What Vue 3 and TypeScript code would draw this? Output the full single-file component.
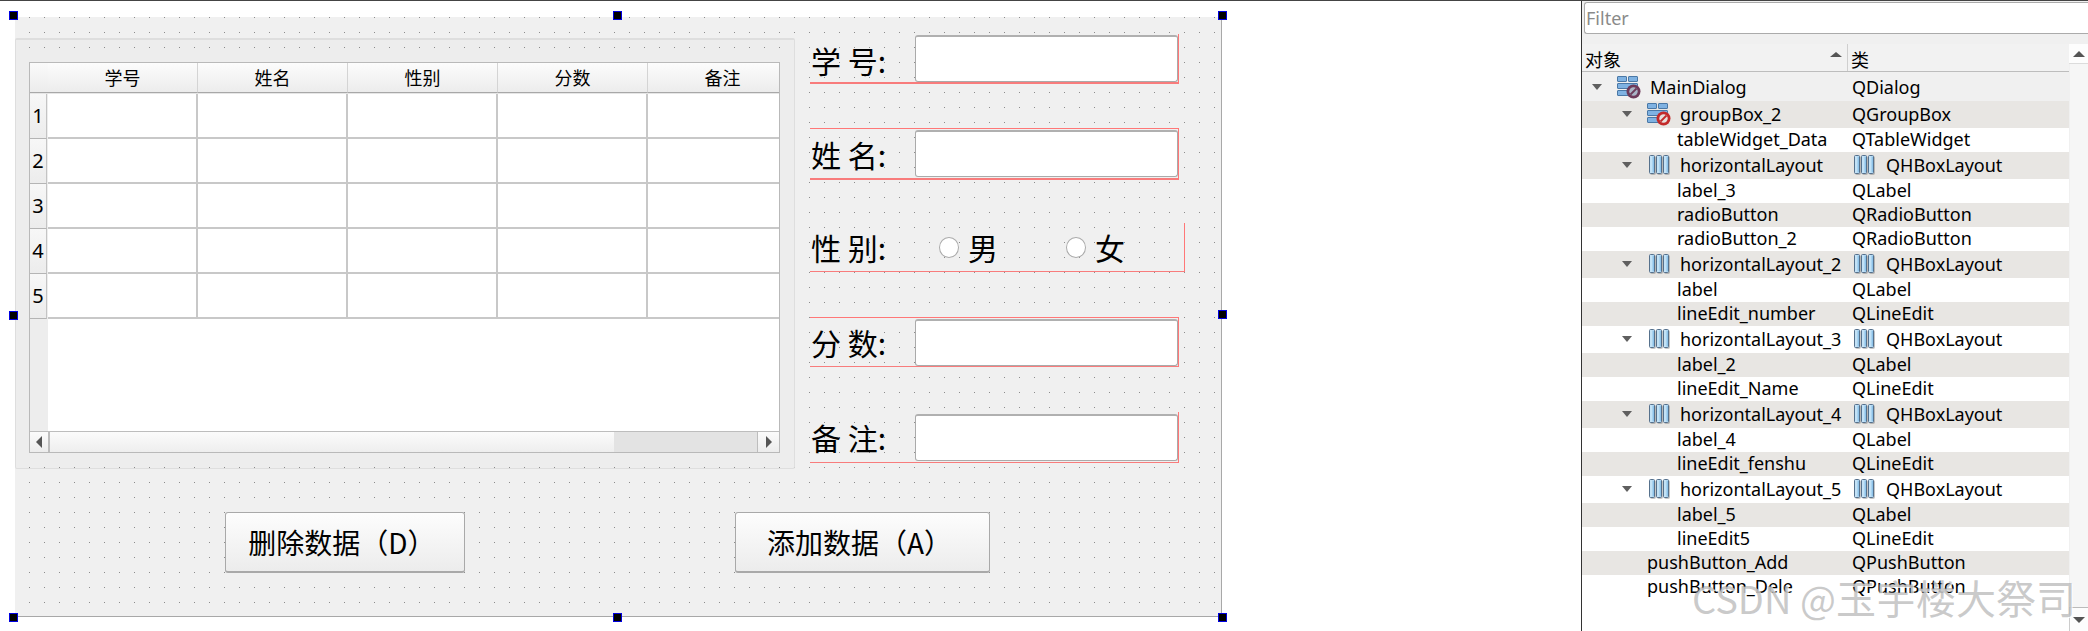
<script setup lang="ts">
type Kind = 'dialog' | 'gbox' | 'hbox' | 'leaf'
interface TreeNode { name: string; cls: string; depth: 0 | 1 | 2; kind: Kind }
const headers = ['学号', '姓名', '性别', '分数', '备注']
const rowNums = [1, 2, 3, 4, 5]
const handles = ['tl', 'tm', 'tr', 'ml', 'mr', 'bl', 'bm', 'br']
const nodes: TreeNode[] = [
  { name: 'MainDialog', cls: 'QDialog', depth: 0, kind: 'dialog' },
  { name: 'groupBox_2', cls: 'QGroupBox', depth: 1, kind: 'gbox' },
  { name: 'tableWidget_Data', cls: 'QTableWidget', depth: 2, kind: 'leaf' },
  { name: 'horizontalLayout', cls: 'QHBoxLayout', depth: 1, kind: 'hbox' },
  { name: 'label_3', cls: 'QLabel', depth: 2, kind: 'leaf' },
  { name: 'radioButton', cls: 'QRadioButton', depth: 2, kind: 'leaf' },
  { name: 'radioButton_2', cls: 'QRadioButton', depth: 2, kind: 'leaf' },
  { name: 'horizontalLayout_2', cls: 'QHBoxLayout', depth: 1, kind: 'hbox' },
  { name: 'label', cls: 'QLabel', depth: 2, kind: 'leaf' },
  { name: 'lineEdit_number', cls: 'QLineEdit', depth: 2, kind: 'leaf' },
  { name: 'horizontalLayout_3', cls: 'QHBoxLayout', depth: 1, kind: 'hbox' },
  { name: 'label_2', cls: 'QLabel', depth: 2, kind: 'leaf' },
  { name: 'lineEdit_Name', cls: 'QLineEdit', depth: 2, kind: 'leaf' },
  { name: 'horizontalLayout_4', cls: 'QHBoxLayout', depth: 1, kind: 'hbox' },
  { name: 'label_4', cls: 'QLabel', depth: 2, kind: 'leaf' },
  { name: 'lineEdit_fenshu', cls: 'QLineEdit', depth: 2, kind: 'leaf' },
  { name: 'horizontalLayout_5', cls: 'QHBoxLayout', depth: 1, kind: 'hbox' },
  { name: 'label_5', cls: 'QLabel', depth: 2, kind: 'leaf' },
  { name: 'lineEdit5', cls: 'QLineEdit', depth: 2, kind: 'leaf' },
  { name: 'pushButton_Add', cls: 'QPushButton', depth: 1, kind: 'leaf' },
  { name: 'pushButton_Dele', cls: 'QPushButton', depth: 1, kind: 'leaf' },
]
</script>

<template>
  <div class="page">
    <section class="designer">
      <div class="form">
        <span v-for="h in handles" :key="h" class="handle" :class="h"></span>
        <div class="upper">
          <div class="group">
            <div class="table">
              <div class="thead">
                <div class="corner"></div>
                <div class="hcols">
                  <div v-for="h in headers" :key="h" class="hcell">{{ h }}</div>
                </div>
              </div>
              <div v-for="n in rowNums" :key="n" class="trow">
                <div class="rhead">{{ n }}</div>
                <div class="cells">
                  <div v-for="h in headers" :key="h" class="cell"></div>
                </div>
              </div>
              <div class="filler">
                <div class="strip"></div>
                <div class="blank"></div>
              </div>
              <div class="hscroll">
                <div class="sbtn"><span class="tri-left"></span></div>
                <div class="thumb"></div>
                <div class="trough"></div>
                <div class="sbtn end"><span class="tri-right"></span></div>
              </div>
            </div>
          </div>
          <div class="fields">
            <div class="field r1">
              <span class="flabel">学 号:</span>
              <div class="input"></div>
            </div>
            <div class="field r2">
              <span class="flabel">姓 名:</span>
              <div class="input"></div>
            </div>
            <div class="field r3">
              <span class="flabel">性 别:</span>
              <label class="radio"><span class="dot"></span><span>男</span></label>
              <label class="radio"><span class="dot"></span><span>女</span></label>
            </div>
            <div class="field r4">
              <span class="flabel">分 数:</span>
              <div class="input"></div>
            </div>
            <div class="field r5">
              <span class="flabel">备 注:</span>
              <div class="input"></div>
            </div>
          </div>
        </div>
        <div class="actions">
          <button class="btn del">删除数据（D）</button>
          <button class="btn add">添加数据（A）</button>
        </div>
      </div>
    </section>

    <aside class="inspector">
      <div class="filterbar">
        <div class="filter">Filter</div>
      </div>
      <div class="treewrap">
        <div class="tree">
          <div class="treehead">
            <div class="th first"><span>对象</span><span class="sort"></span></div>
            <div class="th"><span>类</span></div>
          </div>
          <div v-for="(n, i) in nodes" :key="n.name" class="node" :class="[`d${n.depth}`, n.kind, { top: i === 0 }]">
            <div class="ncol">
              <span v-if="n.kind !== 'leaf'" class="arrow"></span>
              <span v-if="n.kind === 'dialog' || n.kind === 'gbox'" class="icon">
                <svg width="24" height="24" viewBox="0 0 24 24">
                  <g fill="#7fb2e2" stroke="#4a78a6" stroke-width="1">
                    <rect x="0.5" y="1.5" width="9" height="5" rx="0.5" />
                    <rect x="11.5" y="1.5" width="9" height="5" rx="0.5" />
                    <rect x="0.5" y="8.5" width="20" height="5" rx="0.5" />
                    <rect x="0.5" y="15.5" width="12" height="5" rx="0.5" />
                  </g>
                  <g v-if="n.kind === 'dialog'">
                    <circle cx="16.5" cy="16.5" r="7" fill="#6d3a5a" />
                    <circle cx="16.5" cy="16.5" r="4.2" fill="#a9b4c6" />
                    <path d="M13.5 19.5 19.5 13.5" stroke="#6d3a5a" stroke-width="1.8" />
                  </g>
                  <g v-else>
                    <circle cx="16.5" cy="16.5" r="7" fill="#c32a2a" />
                    <circle cx="16.5" cy="16.5" r="4.2" fill="#e6e0dc" />
                    <path d="M13.5 19.5 19.5 13.5" stroke="#c32a2a" stroke-width="1.8" />
                  </g>
                </svg>
              </span>
              <span v-if="n.kind === 'hbox'" class="icon">
                <svg class="barsvg" width="20" height="20" viewBox="0 0 20 20">
                  <g fill="#c3e2f6" stroke="#56718c" stroke-width="1">
                    <rect x="0.5" y="0.5" width="5" height="18" rx="1" />
                    <rect x="7.5" y="0.5" width="5" height="18" rx="1" />
                    <rect x="14.5" y="0.5" width="5" height="18" rx="1" />
                  </g>
                  <g fill="#8fc4ea">
                    <rect x="3.5" y="1.5" width="1.5" height="16" />
                    <rect x="10.5" y="1.5" width="1.5" height="16" />
                    <rect x="17.5" y="1.5" width="1.5" height="16" />
                  </g>
                </svg>
              </span>
              <span class="nname">{{ n.name }}</span>
            </div>
            <div class="ccol">
              <svg v-if="n.kind === 'hbox'" class="barsvg cicon" width="20" height="20" viewBox="0 0 20 20">
                <g fill="#c3e2f6" stroke="#56718c" stroke-width="1">
                  <rect x="0.5" y="0.5" width="5" height="18" rx="1" />
                  <rect x="7.5" y="0.5" width="5" height="18" rx="1" />
                  <rect x="14.5" y="0.5" width="5" height="18" rx="1" />
                </g>
                <g fill="#8fc4ea">
                  <rect x="3.5" y="1.5" width="1.5" height="16" />
                  <rect x="10.5" y="1.5" width="1.5" height="16" />
                  <rect x="17.5" y="1.5" width="1.5" height="16" />
                </g>
              </svg>
              <span>{{ n.cls }}</span>
            </div>
          </div>
        </div>
        <div class="vscroll">
          <div class="vbtn"><span class="tri-up"></span></div>
          <div class="vtrack"></div>
          <div class="vbtn low"><span class="tri-down"></span></div>
        </div>
      </div>
      <div class="watermark">CSDN @<span class="wm-cjk">玉宇楼大祭司</span></div>
    </aside>
  </div>
</template>

<style scoped>
.page {
  width: 2088px;
  height: 631px;
  box-sizing: border-box;
  border-top: 1px solid #444;
  display: flex;
  overflow: hidden;
  background: #fff;
  font-family: "Noto Sans", "Noto Sans CJK SC", sans-serif;
  color: #000;
}
.designer {
  width: 1581px;
  flex: none;
  padding: 16px 0 0 15px;
  box-sizing: border-box;
}
.form {
  position: relative;
  width: 1207px;
  height: 600px;
  box-sizing: border-box;
  border-right: 1px solid #a8a8a8;
  border-bottom: 1px solid #a8a8a8;
  padding-top: 17px;
  background-color: #f0f0f0;
  background-image: conic-gradient(from 270deg at 1px 1px, #8c8c8c 90deg, transparent 0);
  background-size: 15px 15px;
  background-position: 14px 0;
  font-family: "Noto Sans CJK SC", "Noto Sans", sans-serif;
}
.handle {
  position: absolute;
  width: 9px;
  height: 9px;
  box-sizing: border-box;
  background: #000;
  border: 1px solid #0000e0;
  z-index: 2;
}
.tl { left: -6px; top: -6px; }
.tm { left: 598px; top: -6px; }
.tr { left: 1203px; top: -6px; }
.ml { left: -6px; top: 294px; }
.mr { left: 1203px; top: 293px; }
.bl { left: -6px; top: 596px; }
.bm { left: 598px; top: 596px; }
.br { left: 1203px; top: 596px; }

.upper { display: flex; align-items: flex-start; }
.group {
  width: 780px;
  height: 431px;
  margin-top: 4px;
  flex: none;
  box-sizing: border-box;
  border: 1px solid #dedede;
  border-top-width: 2px;
  border-radius: 2px;
  padding: 22px 14px 15px 13px;
  background: rgba(0, 0, 0, 0.012);
}
.table {
  height: 100%;
  box-sizing: border-box;
  border: 1px solid #b9b9b9;
  display: flex;
  flex-direction: column;
  overflow: hidden;
}
.thead {
  display: flex;
  height: 30px;
  margin-bottom: 1px;
  flex: none;
  box-shadow: 0 1px 0 #e6e6e6;
}
.corner {
  width: 18px;
  flex: none;
  background: linear-gradient(#fafafa, #ececec);
  border-bottom: 1px solid #a8a8a8;
  box-sizing: border-box;
}
.hcols { display: flex; flex: none; }
.hcell {
  width: 150px;
  flex: none;
  box-sizing: border-box;
  background: linear-gradient(#fcfcfc, #ececec);
  border-right: 1px solid #d4d4d4;
  border-bottom: 1px solid #a8a8a8;
  text-align: center;
  font-size: 18px;
  line-height: 28px;
}
.trow { display: flex; height: 45px; flex: none; }
.rhead {
  width: 17px;
  margin-right: 1px;
  flex: none;
  box-sizing: border-box;
  background: linear-gradient(#f7f7f7, #ececec);
  border-right: 1px solid #c4c4c4;
  border-bottom: 1px solid #b4b4b4;
  font-family: "Noto Sans", sans-serif;
  font-size: 20px;
  line-height: 44px;
  text-align: center;
}
.cells { display: flex; flex: none; }
.cell {
  width: 150px;
  flex: none;
  box-sizing: border-box;
  background: #fff;
  border-right: 2px solid #c8c8c8;
  border-bottom: 2px solid #c8c8c8;
}
.filler { flex: 1; display: flex; min-height: 0; }
.strip { width: 18px; flex: none; background: #ededed; }
.blank { flex: 1; background: #fff; }
.hscroll {
  height: 21px;
  flex: none;
  box-sizing: border-box;
  border-top: 1px solid #bdbdbd;
  display: flex;
  background: #f4f4f4;
}
.sbtn {
  width: 20px;
  flex: none;
  box-sizing: border-box;
  border-right: 2px solid #bdbdbd;
  background: linear-gradient(#fbfbfb, #ececec);
  display: flex;
  align-items: center;
  justify-content: center;
}
.sbtn.end { border-right: 0; border-left: 1px solid #bdbdbd; width: 22px; }
.tri-left, .tri-right {
  width: 0;
  height: 0;
  border-top: 6px solid transparent;
  border-bottom: 6px solid transparent;
}
.tri-left { border-right: 6px solid #555; }
.tri-right { border-left: 6px solid #555; }
.thumb { width: 564px; flex: none; background: linear-gradient(#fbfbfb, #eeeeee); }
.trough { flex: 1; background: #e3e3e3; }

.fields { margin-left: 15px; width: 380px; flex: none; }
.field {
  display: flex;
  align-items: center;
  box-sizing: border-box;
  width: 369px;
  border-right: 1px solid #f77;
  border-bottom: 2px solid #f87c7c;
}
.r1 { height: 50px; }
.r2 { height: 52px; margin-top: 44px; border-top: 1px solid #f77; }
.r3 { height: 49px; margin-top: 43px; width: 375px; border-bottom-width: 1px; }
.r4 { height: 50px; margin-top: 45px; border-top: 1px solid #f77; border-bottom-width: 1px; }
.r5 { height: 51px; margin-top: 45px; border-bottom-width: 1px; }
.flabel {
  width: 105px;
  flex: none;
  box-sizing: border-box;
  padding-left: 1px;
  font-size: 30px;
  line-height: 40px;
  white-space: pre;
}
.r1 .flabel { padding-top: 4px; }
.input {
  flex: 1;
  height: 47px;
  box-sizing: border-box;
  background: #fff;
  border: 1px solid #aaa;
  border-top: 2px solid #b0b0b0;
  border-radius: 3px;
}
.radio {
  display: flex;
  align-items: center;
  gap: 9px;
  width: 127px;
  flex: none;
  font-size: 30px;
  line-height: 40px;
}
.radio:first-of-type { margin-left: 24px; }
.dot {
  width: 20px;
  height: 21px;
  flex: none;
  box-sizing: border-box;
  border: 1.5px solid #aaa;
  border-radius: 50%;
  background: #fff;
}
.actions {
  display: flex;
  margin-top: 43px;
  margin-left: 210px;
  gap: 270px;
}
.btn {
  height: 61px;
  box-sizing: border-box;
  border: 1px solid #a9a9a9;
  border-bottom-width: 2px;
  border-radius: 3px;
  background: linear-gradient(#fdfdfd, #ececec);
  font-family: "Noto Sans CJK SC", "Noto Sans", sans-serif;
  font-size: 28px;
  color: #000;
  padding: 0 6px 0 0;
}
.del { width: 240px; }
.add { width: 255px; }

.inspector {
  position: relative;
  flex: 1;
  min-width: 0;
  box-sizing: border-box;
  border-left: 1px solid #333;
  display: flex;
  flex-direction: column;
  background: #f0f0f0;
}
.filterbar {
  height: 43px;
  flex: none;
  box-sizing: border-box;
  padding: 1px 0 0 2px;
}
.filter {
  height: 32px;
  box-sizing: border-box;
  background: #fff;
  border: 1px solid #ababab;
  border-right: 0;
  border-radius: 3px 0 0 3px;
  padding-left: 1px;
  color: #8a8a8a;
  font-size: 18px;
  line-height: 31px;
}
.treewrap { flex: 1; display: flex; min-height: 0; background: #fff; }
.tree { width: 487px; flex: none; }
.treehead {
  height: 28px;
  display: flex;
  box-sizing: border-box;
  border-bottom: 1px solid #bdbdbd;
  background: #f2f2f2;
}
.th {
  display: flex;
  align-items: center;
  font-family: "Noto Sans CJK SC", sans-serif;
  font-size: 18px;
  padding: 2px 0 0 3px;
}
.th.first {
  width: 266px;
  flex: none;
  box-sizing: border-box;
  border-right: 1px solid #cfcfcf;
  justify-content: space-between;
  padding-right: 5px;
}
.sort {
  width: 0;
  height: 0;
  margin-bottom: 9px;
  border-left: 6px solid transparent;
  border-right: 6px solid transparent;
  border-bottom: 5px solid #555;
}
.node {
  display: flex;
  height: 24px;
  box-sizing: border-box;
  padding-bottom: 2px;
  align-items: center;
  font-size: 18px;
  white-space: nowrap;
}
.node.dialog { height: 29px; padding-bottom: 0; }
.node.gbox, .node.hbox { height: 27px; }
.node:nth-child(odd) { background: #e8e6e3; }
.node.top { background: #f0f0f0; }
.ncol {
  width: 270px;
  flex: none;
  box-sizing: border-box;
  display: flex;
  align-items: center;
}
.d0 .ncol { padding-left: 10px; }
.d1 .ncol { padding-left: 40px; }
.d1.leaf .ncol { padding-left: 65px; }
.d2 .ncol { padding-left: 95px; }
.arrow {
  width: 0;
  height: 0;
  flex: none;
  margin-right: 15px;
  border-left: 5px solid transparent;
  border-right: 5px solid transparent;
  border-top: 6px solid #5f5f5f;
}
.icon {
  width: 24px;
  height: 24px;
  flex: none;
  margin-right: 9px;
  display: flex;
  align-items: center;
  justify-content: center;
}
.barsvg { filter: drop-shadow(1px 1px 0 rgba(90, 90, 90, 0.35)); }
.ccol { display: flex; align-items: center; padding-left: 0; }
.cicon { margin: 0 12px 0 2px; flex: none; }
.vscroll {
  flex: 1;
  display: flex;
  flex-direction: column;
  background: #f6f6f6;
  box-shadow: inset 1px 0 0 #f0f0f0;
}
.vbtn {
  height: 19px;
  flex: none;
  display: flex;
  align-items: center;
  justify-content: center;
  border-bottom: 1px solid #dcdcdc;
  background: #fdfdfd;
}
.vbtn.low { height: 23px; border-bottom: 0; border-top: 1px solid #bbb; border-left: 1px solid #ccc; }
.vtrack { flex: 1; }
.tri-up, .tri-down {
  width: 0;
  height: 0;
  border-left: 6px solid transparent;
  border-right: 6px solid transparent;
}
.tri-up { border-bottom: 6px solid #555; }
.tri-down { border-top: 6px solid #555; }
.watermark {
  position: absolute;
  left: 110px;
  top: 571px;
  font-family: "Noto Sans CJK SC", sans-serif;
  font-size: 38px;
  line-height: 50px;
  color: rgba(150, 150, 150, 0.5);
  text-shadow: 1px 1px 0 rgba(255, 255, 255, 0.8);
  white-space: nowrap;
}
.wm-cjk { font-size: 40px; }
</style>
